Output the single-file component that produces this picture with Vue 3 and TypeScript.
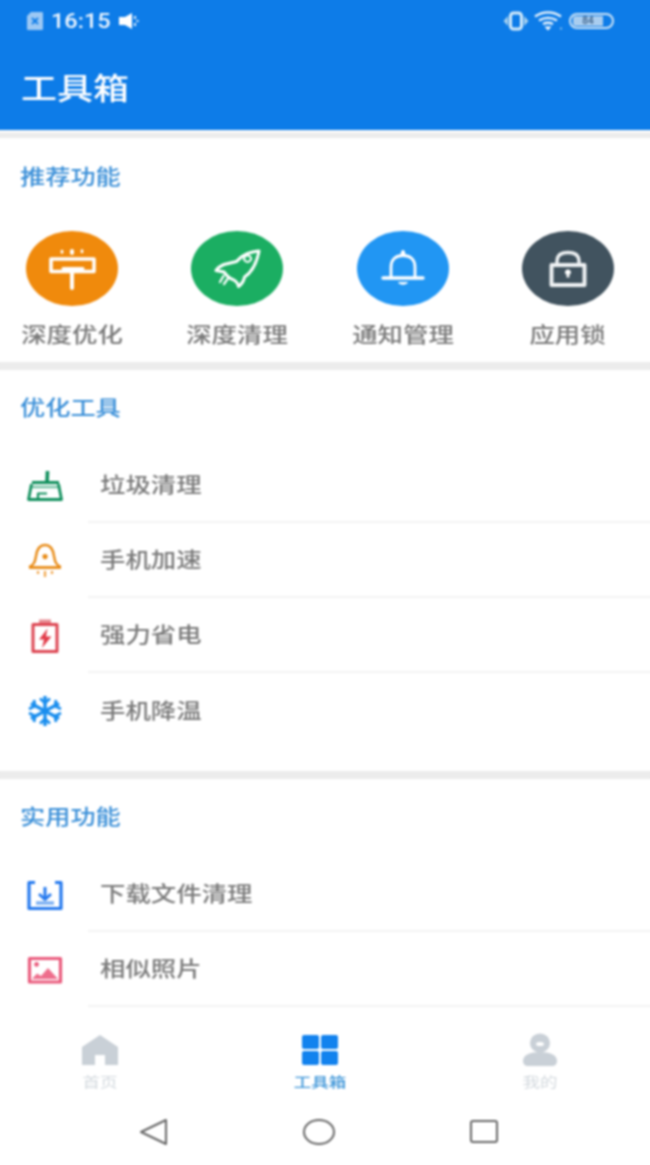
<script setup lang="ts">
interface Shape { d: string; fill?: string; stroke?: string; w?: number }
interface Tool { label: string; color: string; width: number; height: number; shapes: Shape[] }
interface Group { title: string; tools: Tool[] }

const featured: Tool[] = [
  {
    label: '深度优化', color: '#f08a0c', width: 92, height: 75,
    shapes: [
      { d: 'M25 28H68V40.5H25Z', stroke: '#fff', w: 3.6 },
      { d: 'M37 37.5H57', stroke: '#fff', w: 3 },
      { d: 'M46 40V57', stroke: '#fff', w: 4 },
      { d: 'M46 20v2', stroke: '#fff', w: 4 },
      { d: 'M36 20v1.5M56 19.5v1.5', stroke: '#fff', w: 2.6 }
    ]
  },
  {
    label: '深度清理', color: '#1bae62', width: 92, height: 75,
    shapes: [
      { d: 'M68 20C59 20.5 51 24 45.5 30.5L33 33.5C29.5 35 26.5 37 25 39.5L33 41C36 45 39 48 42 48.5C45 50 47 52.5 47.5 55.5C51 53 53 49.5 53.5 46C61 41 66 31 68 20Z', stroke: '#fff', w: 3 },
      { d: 'M56.5 24.5a3.5 3.2 0 1 0 .1 0Z', stroke: '#fff', w: 2 },
      { d: 'M32.5 45L29 51M36.5 48L33 53', stroke: '#fff', w: 2.2 }
    ]
  },
  {
    label: '通知管理', color: '#2196f3', width: 92, height: 75,
    shapes: [
      { d: 'M34 47V36C34 28 39 24.5 46 24.5C53 24.5 58 28 58 36V47', stroke: '#fff', w: 2.8 },
      { d: 'M26 47H66', stroke: '#fff', w: 3.4 },
      { d: 'M43.5 24.5C43.5 21 44.5 19 46 19C47.5 19 48.5 21 48.5 24.5Z', fill: '#fff' },
      { d: 'M41 51H51C50 54.5 42 54.5 41 51Z', fill: '#fff' }
    ]
  },
  {
    label: '应用锁', color: '#41535f', width: 92, height: 75,
    shapes: [
      { d: 'M29.5 34H62.5V54H29.5Z', stroke: '#eef1f3', w: 4 },
      { d: 'M35 33V30C35 24.5 39 21.5 46 21.5C53 21.5 57 24.5 57 30V33', stroke: '#eef1f3', w: 3.4 },
      { d: 'M46 38.5a3 2.8 0 1 1-.1 0ZM44.6 42h2.8v4.5h-2.8Z', fill: '#fff' }
    ]
  }
]

const groups: Group[] = [
  {
    title: '优化工具',
    tools: [
      {
        label: '垃圾清理', color: '', width: 38, height: 34,
        shapes: [
          { d: 'M21.5 2L21 13', stroke: '#0f8f5c', w: 3.6 },
          { d: 'M6 13.5H33', stroke: '#0f8f5c', w: 3 },
          { d: 'M6 18H33', stroke: '#7cc4a8', w: 2.6 },
          { d: 'M5.5 15L2.5 30.5H35.5L32.5 15', stroke: '#0f8f5c', w: 2.8 },
          { d: 'M12 30V24.5H21', stroke: '#0f8f5c', w: 2.2 }
        ]
      },
      {
        label: '手机加速', color: '', width: 38, height: 38,
        shapes: [
          { d: 'M3 25C8 23 9 20 10 14C11 7 14 3 19 3C24 3 27 7 28 14C29 20 30 23 35 25', stroke: '#e88a14', w: 2.4 },
          { d: 'M3 25.5H35', stroke: '#e88a14', w: 2.8 },
          { d: 'M19 12a2.6 2.6 0 1 0 .1 0Z', fill: '#e88a14' },
          { d: 'M12 29v3M19 29v6M26 29v3', stroke: '#f0a548', w: 2.2 }
        ]
      },
      {
        label: '强力省电', color: '', width: 38, height: 36,
        shapes: [
          { d: 'M7 6.5H31V33.5H7Z', stroke: '#dd4552', w: 3 },
          { d: 'M13 1.5H25V5H13Z', fill: '#e78b92' },
          { d: 'M21.5 10.5L13 21.5H18L16 30L25.5 18.5H20Z', fill: '#e23b49' }
        ]
      },
      {
        label: '手机降温', color: '', width: 38, height: 34,
        shapes: [
          { d: 'M19 2V32M5 9.5L33 24.5M33 9.5L5 24.5', stroke: '#1a8eee', w: 3.4 },
          { d: 'M14 4.5L19 9L24 4.5M14 29.5L19 25L24 29.5', stroke: '#1a8eee', w: 2.8 },
          { d: 'M3 15L9 12L8 6M35 15L29 12L30 6M3 19L9 22L8 28M35 19L29 22L30 28', stroke: '#1a8eee', w: 2.8 }
        ]
      }
    ]
  },
  {
    title: '实用功能',
    tools: [
      {
        label: '下载文件清理', color: '', width: 38, height: 32,
        shapes: [
          { d: 'M9 3.5H3V29.5H35V3.5H29', stroke: '#2378ee', w: 3.2 },
          { d: 'M19 8V20', stroke: '#2378ee', w: 3 },
          { d: 'M13 15L19 20.5L25 15', stroke: '#2378ee', w: 2.8 },
          { d: 'M10 24H28', stroke: '#7fb2f3', w: 3.6 }
        ]
      },
      {
        label: '相似照片', color: '', width: 38, height: 30,
        shapes: [
          { d: 'M3.5 3.5H34.5V27H3.5Z', stroke: '#ea5a7c', w: 3.2 },
          { d: 'M10.5 7a2.4 2.4 0 1 0 .1 0Z', fill: '#ea5a7c' },
          { d: 'M6 24L11 18.5L15 21L22 13L32 24Z', fill: '#ee6e8c' }
        ]
      }
    ]
  }
]
</script>

<template>
  <div class="page" lang="zh-CN">
    <header class="appbar">
      <div class="status">
        <div class="status-left">
          <svg class="sim" width="18" height="20" viewBox="0 0 18 20">
            <path d="M5 1H16a1 1 0 0 1 1 1V18a1 1 0 0 1-1 1H2a1 1 0 0 1-1-1V5Z" fill="#9cc8f4" />
            <path d="M6 7L12 13M12 7L6 13" stroke="#0d7ce8" stroke-width="1.8" fill="none" />
          </svg>
          <span class="time">16:15</span>
          <svg width="21" height="18" viewBox="0 0 21 18">
            <path d="M1 5H7L14 1V17L7 13H1Z" fill="#fff" />
            <path d="M17 4v3M17 11v3M19.5 8v2" stroke="#d5e8fb" stroke-width="2.2" fill="none" />
          </svg>
        </div>
        <div class="status-right">
          <svg width="26" height="20" viewBox="0 0 26 20">
            <path d="M5 5L0.5 10L5 15ZM21 5L25.5 10L21 15Z" fill="#a9d2ee" />
            <rect x="7.5" y="2" width="11" height="16" rx="3" fill="#0d7ce8" stroke="#d6ecfa" stroke-width="3" />
          </svg>
          <svg width="30" height="20" viewBox="0 0 30 20">
            <path d="M1 5.5C9 0 19 0 27 5.5M5 9.5C11 6 17 6 23 9.5M9 13C12 11.5 16 11.5 19 13" stroke="#eef6fc" stroke-width="2.4" fill="none" />
            <path d="M10.5 15.5H17.5L14 19.5Z" fill="#fff" />
            <circle cx="27" cy="17.5" r="1" fill="#a9d2ee" />
          </svg>
          <div class="battery">
            <span class="battery-fill">84</span>
          </div>
        </div>
      </div>
      <div class="appbar-title"><h1>工具箱</h1></div>
    </header>
    <div class="top-divider"></div>

    <section class="featured">
      <div class="section-title"><span>推荐功能</span></div>
      <div class="featured-row">
        <div v-for="item in featured" :key="item.label" class="featured-item">
          <svg class="bubble" :width="item.width" :height="item.height" viewBox="0 0 92 75">
            <ellipse cx="46" cy="37.5" rx="46" ry="37.5" :fill="item.color" />
            <path
              v-for="(s, i) in item.shapes"
              :key="i"
              :d="s.d"
              :fill="s.fill ?? 'none'"
              :stroke="s.stroke ?? 'none'"
              :stroke-width="s.w ?? 0"
              stroke-linecap="round"
              stroke-linejoin="round"
            />
          </svg>
          <span class="featured-label">{{ item.label }}</span>
        </div>
      </div>
    </section>

    <template v-for="(group, g) in groups" :key="group.title">
      <div class="divider"></div>
      <section class="group" :class="{ 'group-first': g === 0 }">
        <div class="section-title section-title-tight"><span>{{ group.title }}</span></div>
        <div v-for="(tool, t) in group.tools" :key="tool.label" class="row">
          <div class="row-icon">
            <svg :width="tool.width" :height="tool.height" :viewBox="`0 0 ${tool.width} ${tool.height}`">
              <path
                v-for="(s, i) in tool.shapes"
                :key="i"
                :d="s.d"
                :fill="s.fill ?? 'none'"
                :stroke="s.stroke ?? 'none'"
                :stroke-width="s.w ?? 0"
                stroke-linejoin="round"
              />
            </svg>
          </div>
          <div class="row-body" :class="{ 'row-last': g === 0 && t === group.tools.length - 1 }">
            <span class="row-label">{{ tool.label }}</span>
          </div>
        </div>
      </section>
    </template>

    <nav class="tabbar">
      <div class="tab">
        <svg width="40" height="32" viewBox="0 0 40 32">
          <path d="M20 1L38 13V31H25V21H15V31H2V13Z" fill="#c9d0d7" />
        </svg>
        <span class="tab-label">首页</span>
      </div>
      <div class="tab tab-active">
        <svg width="38" height="32" viewBox="0 0 38 32">
          <rect x="1" y="1" width="17" height="14" rx="2" fill="#1282ee" />
          <rect x="20" y="1" width="17" height="14" rx="2" fill="#1282ee" />
          <rect x="1" y="17" width="17" height="14" rx="2" fill="#1282ee" />
          <rect x="20" y="17" width="17" height="14" rx="2" fill="#1282ee" />
        </svg>
        <span class="tab-label">工具箱</span>
      </div>
      <div class="tab">
        <svg width="38" height="34" viewBox="0 0 38 34">
          <ellipse cx="19" cy="10" rx="10" ry="9.5" fill="#c9d0d7" />
          <ellipse cx="19" cy="11" rx="4" ry="2" fill="#fff" />
          <path d="M2 28C2 22 9 19 19 19C29 19 36 22 36 28C36 31 34 33 31 33H7C4 33 2 31 2 28Z" fill="#c9d0d7" />
        </svg>
        <span class="tab-label">我的</span>
      </div>
    </nav>

    <div class="sysnav">
      <svg width="28" height="28" viewBox="0 0 28 28">
        <path d="M2 14L27 2V26Z" fill="none" stroke="#666" stroke-width="2" stroke-linejoin="round" />
      </svg>
      <svg width="33" height="28" viewBox="0 0 33 28">
        <ellipse cx="17" cy="14" rx="15" ry="12" fill="none" stroke="#666" stroke-width="2" />
      </svg>
      <svg width="28" height="28" viewBox="0 0 28 28">
        <rect x="1" y="3" width="26" height="21" rx="2" fill="none" stroke="#666" stroke-width="2" />
      </svg>
    </div>
  </div>
</template>

<style>
html,
body {
  overflow: hidden;
  background: #fff;
}
</style>

<style scoped>
.page {
  width: 650px;
  height: 1165px;
  background: #fff;
  display: flex;
  flex-direction: column;
  font-family: "Noto Sans CJK SC", "Noto Sans", sans-serif;
  filter: blur(0.85px);
}
.appbar {
  height: 136px;
  flex: none;
  margin: -6px -6px 0;
  padding: 6px 6px 0;
  box-sizing: border-box;
  background: #0d7ce8;
  color: #fff;
}
.status {
  height: 42px;
  display: flex;
  align-items: center;
  justify-content: space-between;
  padding: 0 36px 0 26px;
}
.status-left,
.status-right {
  display: flex;
  align-items: center;
}
.time {
  font-family: Roboto, sans-serif;
  font-size: 21px;
  font-weight: 500;
  margin: 0 8px 0 7px;
  transform: scaleX(1.12);
  width: 59px;
  transform-origin: left center;
  color: #eef6fe;
}
.status-right {
  gap: 5px;
}
.battery {
  width: 45px;
  height: 16px;
  border: 2px solid #cfe4f6;
  border-radius: 8px;
  box-sizing: border-box;
  padding: 1px 2px;
  display: flex;
}
.battery-fill {
  width: 30px;
  background: #a9cdef;
  border-radius: 3px 0 0 3px;
  color: #4a6f96;
  font: 700 10px/10px Roboto, sans-serif;
  text-align: center;
}
.appbar-title {
  height: 88px;
  padding: 0 0 0 21px;
  box-sizing: border-box;
  display: flex;
  align-items: center;
}
.appbar-title h1 {
  margin: 0;
  font-size: 30px;
  font-weight: 500;
  line-height: 40px;
  transform: scaleX(1.2);
  transform-origin: left center;
}
.top-divider {
  flex: none;
  height: 8px;
  margin: 0 -6px;
  box-sizing: border-box;
  background: #ececec;
  border-top: 3px solid #f9f9f9;
}
.divider {
  flex: none;
  height: 8px;
  margin: 0 -6px;
  background: #ececec;
}
.section-title {
  height: 78px;
  padding: 0 0 4px 20px;
  box-sizing: border-box;
  display: flex;
  align-items: center;
  color: #3a8fd8;
  font-size: 21px;
  font-weight: 500;
}
.section-title-tight {
  padding-bottom: 6px;
}
.section-title span {
  transform: scaleX(1.2);
  transform-origin: left center;
}
.featured {
  flex: none;
  height: 224px;
}
.featured-row {
  display: flex;
  justify-content: space-between;
  padding: 15px 36px 0 26px;
}
.featured-item {
  width: 92px;
  display: flex;
  flex-direction: column;
  align-items: center;
}
.featured-label {
  margin-top: 12px;
  font-size: 21px;
  font-weight: 500;
  line-height: 30px;
  color: #7a7a7a;
  white-space: nowrap;
  transform: scaleX(1.21);
}
.group {
  flex: none;
}
.group-first {
  height: 401px;
}
.row {
  height: 75px;
  display: flex;
}
.row-icon {
  width: 88px;
  padding-left: 2px;
  box-sizing: border-box;
  display: flex;
  align-items: center;
  justify-content: center;
}
.row-body {
  flex: 1;
  margin-right: -6px;
  padding: 0 0 4px 12px;
  display: flex;
  align-items: center;
  border-bottom: 2px solid #f3f3f3;
  box-sizing: border-box;
}
.row-last {
  border-bottom: 0;
}
.row-label {
  font-size: 21px;
  font-weight: 500;
  color: #7a7a7a;
  transform: scaleX(1.21);
  transform-origin: left center;
}
.group:last-of-type {
  height: 228px;
}
.tabbar {
  flex: none;
  height: 89px;
  padding: 26px 70px 0 60px;
  box-sizing: border-box;
  display: flex;
  justify-content: space-between;
}
.tab {
  width: 80px;
  display: flex;
  flex-direction: column;
  align-items: center;
}
.tab svg {
  height: 34px;
}
.tab-label {
  margin-top: 5px;
  font-size: 14px;
  line-height: 18px;
  color: #d3d9de;
  transform: scaleX(1.25);
}
.tab-active .tab-label {
  color: #3d95d8;
  font-weight: 500;
}
.sysnav {
  flex: none;
  height: 70px;
  box-sizing: border-box;
  padding: 22px 0 0 139px;
  display: flex;
  gap: 135px;
  align-items: flex-start;
}
</style>
